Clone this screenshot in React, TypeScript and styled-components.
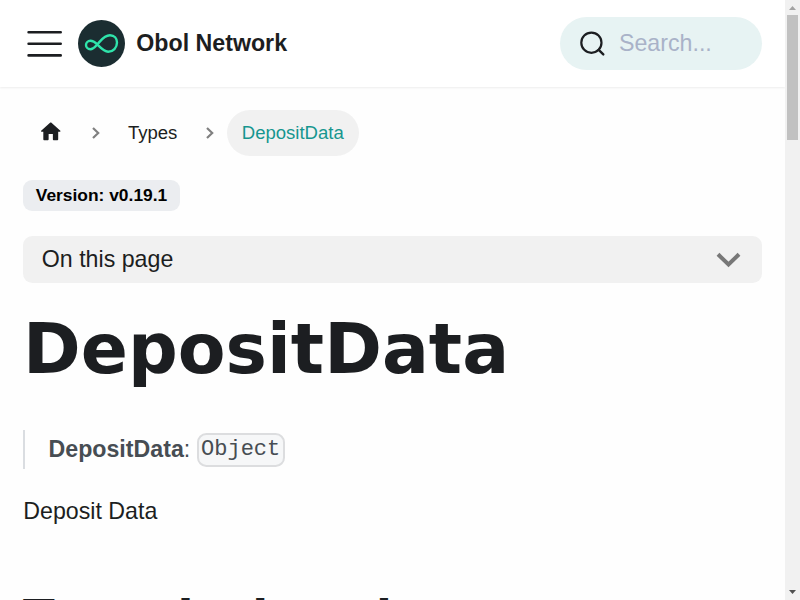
import React from "react";
import styled, { createGlobalStyle } from "styled-components";

const Global = createGlobalStyle`
  *, *::before, *::after { box-sizing: border-box; }
  body {
    margin: 0;
    overflow: hidden;
    background: #fefefe;
    color: #1c1e21;
    font: 23.2px/38.5px "Liberation Sans", Arial, sans-serif;
  }
`;

const Shell = styled.div`
  display: flex;
  height: 600px;
  overflow: hidden;
`;

const Page = styled.div`
  flex: 1;
  min-width: 0;
  overflow: hidden;
`;

const Navbar = styled.header`
  display: flex;
  align-items: center;
  height: 87px;
  padding: 0 23px 0 27px;
  background: #fff;
  box-shadow: 0 1px 2px rgba(0, 0, 0, 0.07);
`;

const MenuIcon = styled.svg`
  width: 36px;
  height: 30px;
  margin-right: 15px;
`;

const Logo = styled.svg`
  width: 47px;
  height: 47px;
  margin-right: 11.3px;
`;

const Brand = styled.span`
  flex: 1;
  font-weight: 700;
`;

const Search = styled.div`
  display: flex;
  align-items: center;
  gap: 12px;
  width: 202px;
  height: 53px;
  padding-left: 19px;
  border-radius: 27px;
  background: #e7f3f3;
  color: #a9b2c8;
  line-height: 51px;

  span { padding-bottom: 1px; }
`;

const SearchIcon = styled.svg`
  width: 28px;
  height: 28px;
`;

const Main = styled.main`
  padding: 23px 23px 0;
`;

const Breadcrumbs = styled.nav`
  display: flex;
  align-items: center;
  height: 46px;
  font-size: 18.56px;
`;

const Crumb = styled.span<{ $active?: boolean }>`
  display: flex;
  align-items: center;
  height: 46px;
  padding: 0 15px;
  border-radius: 47px;
  background: ${(p) => (p.$active ? "#f1f1f1" : "transparent")};
  color: ${(p) => (p.$active ? "#16968f" : "#1c1e21")};
`;

const HomeIcon = styled.svg`
  width: 25.5px;
  height: 25.5px;
  margin-top: -3px;
`;

const Separator = styled.svg`
  width: 12px;
  height: 14px;
  margin: 0 11.2px;
`;

const Badge = styled.span`
  display: block;
  width: 157px;
  height: 31px;
  margin-top: 24px;
  border-radius: 9px;
  background: #ebedf0;
  color: #000;
  font-size: 17.4px;
  font-weight: 700;
  line-height: 31px;
  text-align: center;
`;

const Toc = styled.div`
  display: flex;
  align-items: center;
  justify-content: space-between;
  height: 47px;
  margin-top: 25px;
  padding: 0 20px 0 18.8px;
  border-radius: 9.3px;
  background: #f1f1f1;
`;

const TocArrow = styled.svg`
  width: 27px;
  height: 18px;
`;

const Title = styled.h1`
  margin: 22px 0 0;
  font: 700 69.6px/87px "DejaVu Sans", sans-serif;
`;

const Quote = styled.blockquote`
  height: 39px;
  margin: 38px 0 0;
  padding-left: 23.5px;
  border-left: 2px solid #dadde1;
  color: #474d53;
  white-space: nowrap;
`;

const Code = styled.code`
  display: inline-block;
  height: 34px;
  padding: 0 2.3px;
  border: 2px solid #dcdddf;
  border-radius: 9.3px;
  background: #f6f7f8;
  font: 22.04px/29px "Liberation Mono", monospace;
  vertical-align: top;
  margin-top: 3px;
`;

const Paragraph = styled.p`
  margin: 23px 0 0;
  padding-left: 0.3px;
`;

const Subtitle = styled.h2`
  margin: 57px 0 0;
  font: 700 46.4px/58px "DejaVu Sans", sans-serif;
`;

const Scrollbar = styled.div`
  display: flex;
  flex-direction: column;
  align-items: center;
  width: 15px;
  background: #f1f1f1;
`;

const ScrollArrow = styled.svg`
  width: 15px;
  height: 15px;
`;

const Thumb = styled.div`
  width: 11px;
  height: 125px;
  margin-bottom: auto;
  background: #c1c1c1;
`;

const Chevron = () => (
  <Separator viewBox="0 0 12 14">
    <path d="M3 2 L8.2 7 L3 12" fill="none" stroke="#808080" strokeWidth="2.2" />
  </Separator>
);

export default function App() {
  return (
    <>
      <Global />
      <Shell>
        <Page>
          <Navbar>
            <MenuIcon viewBox="0 0 36 30">
              <path d="M1.6 3.3H33.7M1.6 14.8H33.7M1.6 26.4H33.7" stroke="#1c1e21" strokeWidth="2.6" strokeLinecap="round" />
            </MenuIcon>
            <Logo viewBox="0 0 47 47">
              <circle cx="23.5" cy="23.5" r="23.5" fill="#1b2d31" />
              <path
                d="M19.3 24.4C16.4 21.6 14.7 20.8 12.4 20.8C9.9 20.8 8 22.6 8 25C8 27.4 9.9 29.2 12.4 29.2C15.8 29.2 17.6 26.2 19.3 24.4C22.8 20.8 25.8 15.2 32 15.2C36.3 15.2 39 18.5 39 22.6C39 27.7 35.2 31.7 30.2 31.7C25.6 31.7 22.6 27.7 19.3 24.4Z"
                fill="none"
                stroke="#2fe4ab"
                strokeWidth="2.4"
              />
            </Logo>
            <Brand>Obol Network</Brand>
            <Search>
              <SearchIcon viewBox="0 0 28 28">
                <circle cx="12.4" cy="12.7" r="10.1" fill="none" stroke="#1c1e21" strokeWidth="2.2" />
                <path d="M19.7 19.9L24.3 24.4" stroke="#1c1e21" strokeWidth="2.4" strokeLinecap="round" />
              </SearchIcon>
              <span>Search...</span>
            </Search>
          </Navbar>
          <Main>
            <Breadcrumbs>
              <Crumb>
                <HomeIcon viewBox="0 0 24 24">
                  <path d="M10 19v-5h4v5c0 .55.45 1 1 1h3c.55 0 1-.45 1-1v-7h1.7c.46 0 .68-.57.33-.87L12.67 3.6c-.38-.34-.96-.34-1.34 0l-8.36 7.53c-.34.3-.13.87.33.87H5v7c0 .55.45 1 1 1h3c.55 0 1-.45 1-1z" fill="#1c1e21" />
                </HomeIcon>
              </Crumb>
              <Chevron />
              <Crumb>Types</Crumb>
              <Chevron />
              <Crumb $active>DepositData</Crumb>
            </Breadcrumbs>
            <Badge>Version: v0.19.1</Badge>
            <Toc>
              <span>On this page</span>
              <TocArrow viewBox="0 0 27 18">
                <path d="M3 3.3L13.5 13.5L24 3.3" fill="none" stroke="#787878" strokeWidth="4" />
              </TocArrow>
            </Toc>
            <Title>DepositData</Title>
            <Quote>
              <strong>DepositData</strong>: <Code>Object</Code>
            </Quote>
            <Paragraph>Deposit Data</Paragraph>
            <Subtitle>Type declaration</Subtitle>
          </Main>
        </Page>
        <Scrollbar>
          <ScrollArrow viewBox="0 0 15 15">
            <path d="M4 10L7.5 6L11 10Z" fill="#a3a3a3" />
          </ScrollArrow>
          <Thumb />
          <ScrollArrow viewBox="0 0 15 15">
            <path d="M4 5L7.5 9L11 5Z" fill="#505050" />
          </ScrollArrow>
        </Scrollbar>
      </Shell>
    </>
  );
}
